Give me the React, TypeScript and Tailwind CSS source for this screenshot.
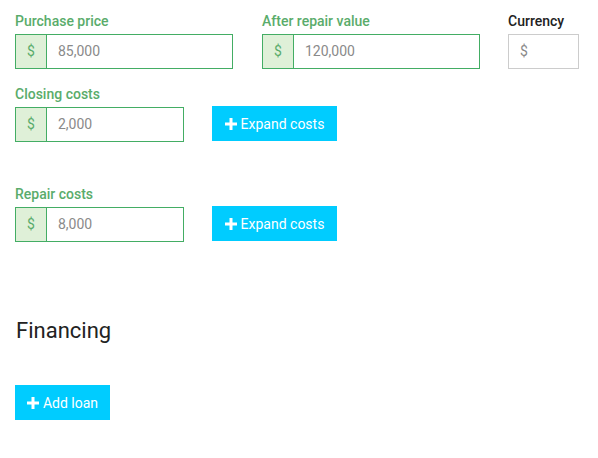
import { ReactNode } from 'react'

function Plus() {
  return (
    <svg viewBox="0 0 12 12" className="h-[12px] w-[12px] mr-[4px]" fill="#fff">
      <path d="M4.5 0h3v4.5H12v3H7.5V12h-3V7.5H0v-3h4.5z" />
    </svg>
  )
}

function Label({ children, dark }: { children: ReactNode; dark?: boolean }) {
  return (
    <div
      className={`text-[14px] font-medium leading-[17px] pt-[1px] mb-[4px] ${dark ? 'text-[#222]' : 'text-[#5aac6b]'}`}
    >
      {children}
    </div>
  )
}

function MoneyInput({ value, width }: { value: string; width: string }) {
  return (
    <div className={`flex h-[35px] border border-[#43ad64] ${width}`}>
      <div className="w-[31px] shrink-0 flex items-center justify-center bg-[#dff0d8] border-r border-[#43ad64] text-[14px] text-[#5aac6b]">
        $
      </div>
      <div className="flex items-center pl-[11px] text-[14px] text-[#8a8a8a]">{value}</div>
    </div>
  )
}

function CyanButton({ children, width }: { children: ReactNode; width: string }) {
  return (
    <button className={`flex items-center justify-center h-[35px] pt-[1px] bg-[#00ccff] text-white text-[14px] font-normal ${width}`}>
      <Plus />
      {children}
    </button>
  )
}

export default function App() {
  return (
    <div className="min-h-[458px] bg-white pl-[15px] pt-[12px]" style={{ fontFamily: 'Roboto, "Liberation Sans", sans-serif' }}>
      <div className="flex">
        <div className="w-[218px]">
          <Label>Purchase price</Label>
          <MoneyInput value="85,000" width="w-[218px]" />
        </div>
        <div className="w-[218px] ml-[29px]">
          <Label>After repair value</Label>
          <MoneyInput value="120,000" width="w-[218px]" />
        </div>
        <div className="ml-[28px]">
          <Label dark>Currency</Label>
          <div className="flex items-center h-[35px] w-[71px] border border-[#cccccc] pl-[11px] text-[14px] text-[#8a8a8a]">
            $
          </div>
        </div>
      </div>

      <div className="mt-[16px] flex items-end">
        <div>
          <Label>Closing costs</Label>
          <MoneyInput value="2,000" width="w-[169px]" />
        </div>
        <div className="ml-[28px] mb-[1px]">
          <CyanButton width="w-[125px]">Expand costs</CyanButton>
        </div>
      </div>

      <div className="mt-[43px] flex items-end">
        <div>
          <Label>Repair costs</Label>
          <MoneyInput value="8,000" width="w-[169px]" />
        </div>
        <div className="ml-[28px] mb-[1px]">
          <CyanButton width="w-[125px]">Expand costs</CyanButton>
        </div>
      </div>

      <h2 className="mt-[76px] ml-[1px] text-[22px] leading-[26px] text-[#222] font-normal">Financing</h2>

      <div className="mt-[41px]">
        <CyanButton width="w-[95px]">Add loan</CyanButton>
      </div>
    </div>
  )
}
